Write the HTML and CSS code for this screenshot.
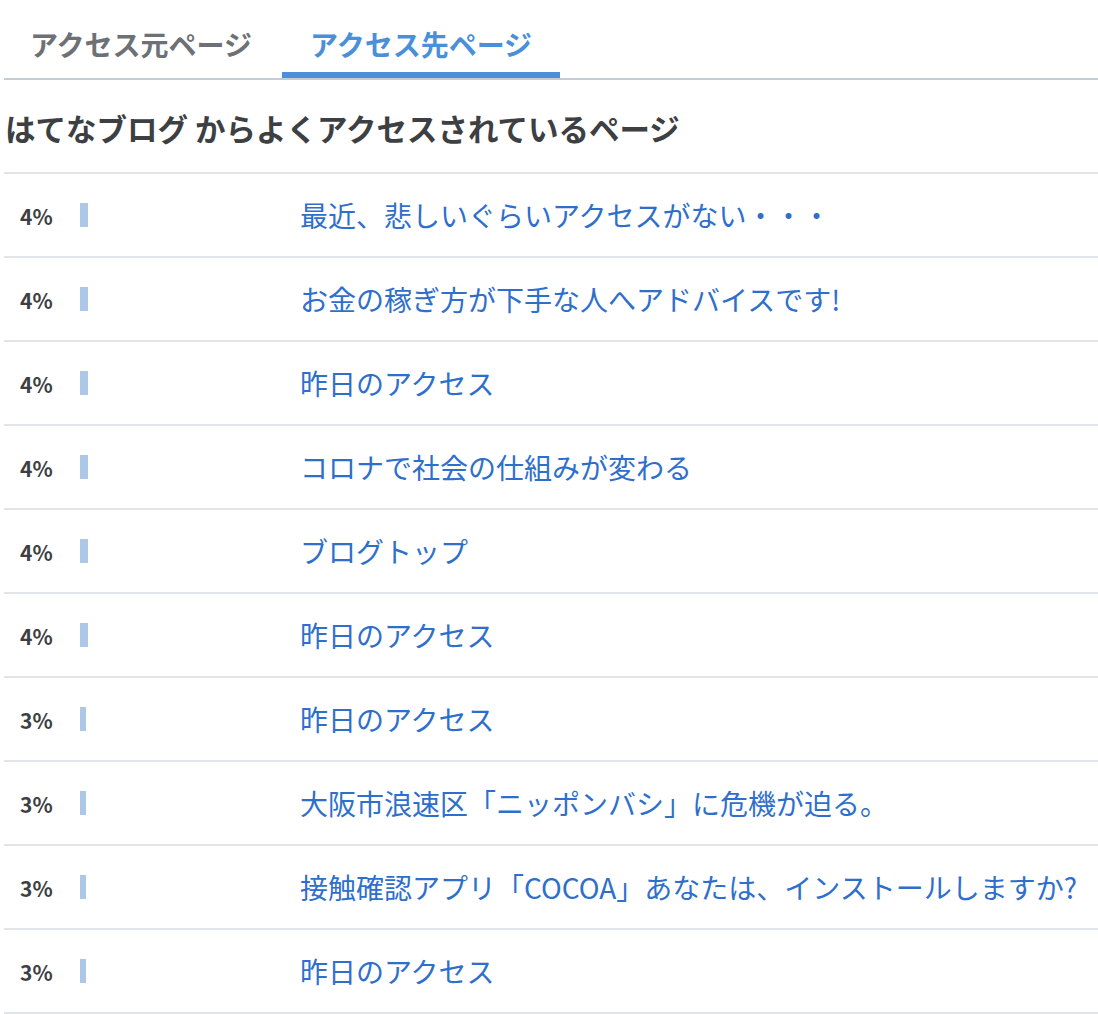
FILE: index.html
```html
<!DOCTYPE html>
<html lang="ja">

<head>
    <meta charset="UTF-8">
    <meta name="viewport" content="width=device-width, initial-scale=1.0">
    <title>アクセス先ページ</title>
    <link rel="stylesheet" href="styles.css">
</head>

<body>
    <div class="access-panel">
        <ul class="access-tabs">
            <li class="access-tab">アクセス元ページ</li>
            <li class="access-tab active">アクセス先ページ</li>
        </ul>

        <h2 class="access-heading">はてなブログ からよくアクセスされているページ</h2>

        <ul class="access-list">
            <li class="access-row">
                <span class="access-rate">4%</span>
                <span class="access-bar"><i style="width: 8px"></i></span>
                <a class="access-title" href="#">最近、悲しいぐらいアクセスがない・・・</a>
            </li>
            <li class="access-row">
                <span class="access-rate">4%</span>
                <span class="access-bar"><i style="width: 8px"></i></span>
                <a class="access-title" href="#">お金の稼ぎ方が下手な人へアドバイスです!</a>
            </li>
            <li class="access-row">
                <span class="access-rate">4%</span>
                <span class="access-bar"><i style="width: 8px"></i></span>
                <a class="access-title" href="#">昨日のアクセス</a>
            </li>
            <li class="access-row">
                <span class="access-rate">4%</span>
                <span class="access-bar"><i style="width: 8px"></i></span>
                <a class="access-title" href="#">コロナで社会の仕組みが変わる</a>
            </li>
            <li class="access-row">
                <span class="access-rate">4%</span>
                <span class="access-bar"><i style="width: 8px"></i></span>
                <a class="access-title" href="#">ブログトップ</a>
            </li>
            <li class="access-row">
                <span class="access-rate">4%</span>
                <span class="access-bar"><i style="width: 8px"></i></span>
                <a class="access-title" href="#">昨日のアクセス</a>
            </li>
            <li class="access-row">
                <span class="access-rate">3%</span>
                <span class="access-bar"><i style="width: 6px"></i></span>
                <a class="access-title" href="#">昨日のアクセス</a>
            </li>
            <li class="access-row">
                <span class="access-rate">3%</span>
                <span class="access-bar"><i style="width: 6px"></i></span>
                <a class="access-title" href="#">大阪市浪速区「ニッポンバシ」に危機が迫る。</a>
            </li>
            <li class="access-row">
                <span class="access-rate">3%</span>
                <span class="access-bar"><i style="width: 6px"></i></span>
                <a class="access-title" href="#">接触確認アプリ「COCOA」あなたは、インストールしますか?</a>
            </li>
            <li class="access-row">
                <span class="access-rate">3%</span>
                <span class="access-bar"><i style="width: 6px"></i></span>
                <a class="access-title" href="#">昨日のアクセス</a>
            </li>
        </ul>
    </div>
</body>

</html>
```

FILE: styles.css
```css
body {
    margin: 0;
    background-color: #fff;
    font-family: "Noto Sans CJK JP", "Noto Sans", sans-serif;
    color: #3d3f43;
}

.access-panel {
    padding-left: 4px;
}

.access-tabs {
    display: flex;
    list-style: none;
    margin: 0;
    padding: 0;
    border-bottom: 2px solid #c4cdd4;
}

.access-tab {
    padding: 24px 28px 8px;
    font-size: 28px;
    font-weight: bold;
    line-height: 40px;
    color: #6d7175;
    border-bottom: 6px solid transparent;
    cursor: pointer;
}

.access-tab:first-child {
    margin-left: -2px;
    padding-right: 30px;
}

.access-tab.active {
    color: #4a90d9;
    border-bottom-color: #4a90d9;
}

.access-heading {
    margin: 26px 0 22px;
    padding-left: 1px;
    font-size: 30.5px;
    font-weight: bold;
    line-height: 44px;
    color: #3d3f43;
}

.access-list {
    list-style: none;
    margin: 0;
    padding: 0;
    border-top: 2px solid #e1e5e9;
}

.access-row {
    display: flex;
    align-items: center;
    height: 82px;
    padding-left: 16px;
    border-bottom: 2px solid #e1e5e9;
}

.access-rate {
    flex: 0 0 60px;
    padding-top: 2px;
    font-size: 21px;
    font-weight: bold;
    color: #3d3f43;
}

.access-bar {
    flex: 0 0 220px;
    display: flex;
}

.access-bar i {
    height: 24px;
    background-color: #adc8e6;
}

.access-title {
    font-size: 28px;
    color: #2f6fcc;
    text-decoration: none;
    white-space: nowrap;
}
```
